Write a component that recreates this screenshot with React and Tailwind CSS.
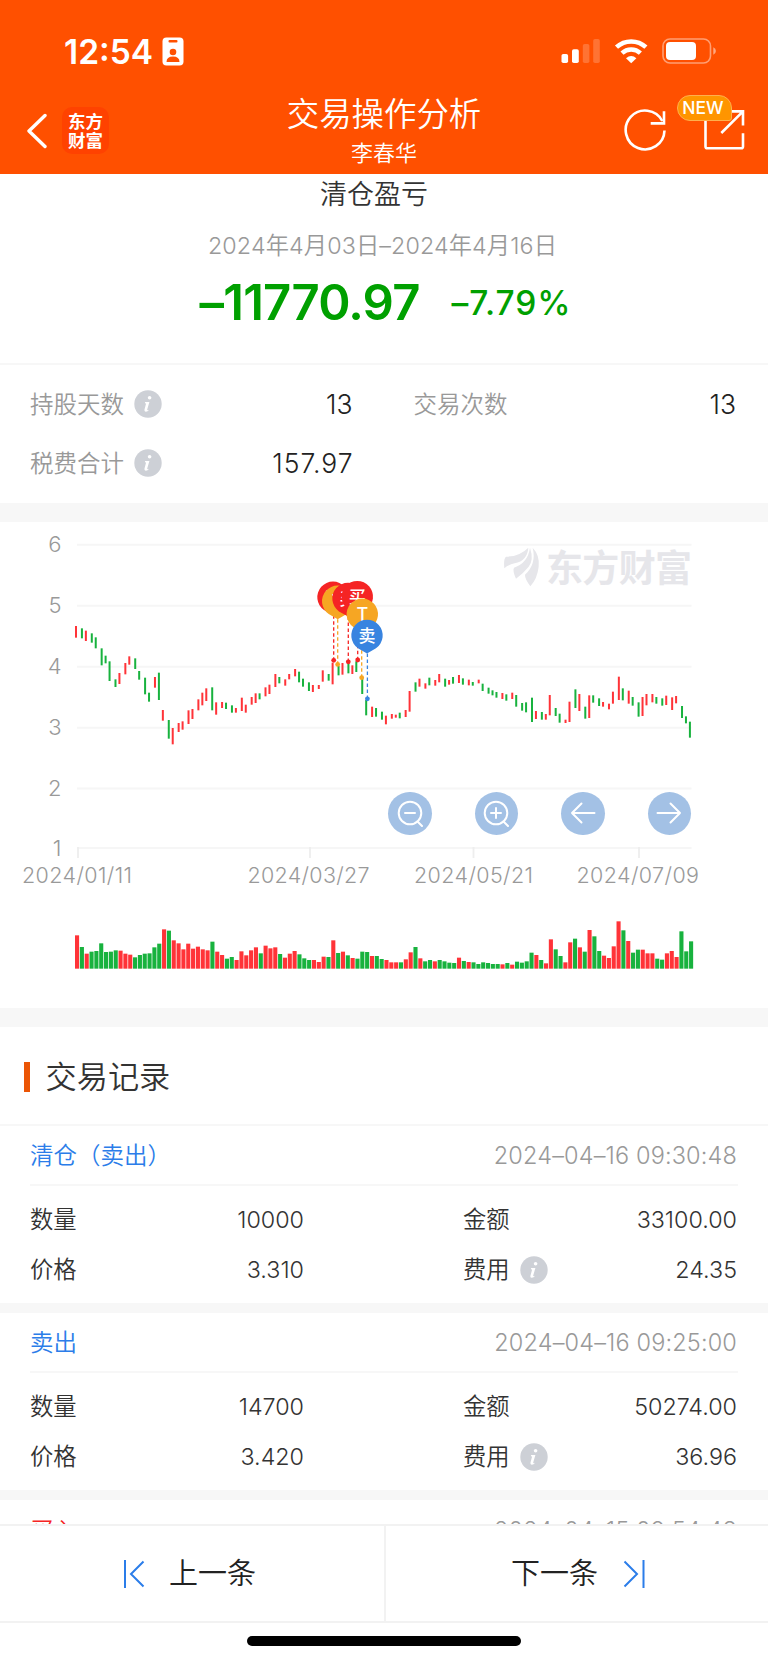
import React from 'react';

// One entry per trading day: [high, low, candle colour]
const priceBars = [
  [318, 353, 'r'], [325, 355, 'g'], [332, 363, 'r'], [340, 368, 'g'], [352, 385, 'g'], [385, 436, 'g'], [407, 430, 'g'], [424, 483, 'g'],
  [478, 501, 'g'], [459, 492, 'r'], [429, 463, 'r'], [409, 434, 'r'], [415, 447, 'g'], [453, 479, 'g'], [473, 523, 'g'], [518, 545, 'g'],
  [471, 503, 'r'], [458, 540, 'g'], [570, 602, 'r'], [600, 656, 'g'], [624, 673, 'r'], [609, 636, 'r'], [604, 629, 'r'], [571, 612, 'r'],
  [567, 597, 'r'], [538, 571, 'r'], [518, 556, 'r'], [505, 543, 'r'], [502, 571, 'g'], [547, 584, 'r'], [546, 564, 'r'], [548, 567, 'g'],
  [556, 578, 'g'], [564, 578, 'r'], [533, 573, 'r'], [554, 578, 'r'], [531, 554, 'r'], [520, 549, 'r'], [520, 538, 'g'], [502, 529, 'r'],
  [494, 522, 'r'], [462, 501, 'r'], [471, 490, 'g'], [478, 497, 'r'], [462, 478, 'r'], [447, 469, 'r'], [455, 487, 'g'], [476, 500, 'g'],
  [487, 513, 'g'], [495, 516, 'r'], [495, 507, 'r'], [451, 485, 'r'], [462, 482, 'g'], [428, 493, 'r'], [438, 466, 'g'], [429, 464, 'r'],
  [429, 460, 'g'], [436, 462, 'r'], [424, 456, 'g'], [475, 522, 'g'], [540, 586, 'g'], [560, 591, 'r'], [564, 590, 'g'], [575, 599, 'g'],
  [587, 613, 'r'], [582, 596, 'r'], [584, 593, 'r'], [578, 595, 'g'], [570, 591, 'r'], [513, 575, 'r'], [487, 515, 'g'], [476, 500, 'r'],
  [490, 506, 'r'], [473, 496, 'g'], [480, 497, 'r'], [462, 487, 'r'], [476, 500, 'g'], [480, 494, 'r'], [471, 491, 'g'], [465, 489, 'r'],
  [475, 494, 'g'], [479, 496, 'r'], [486, 497, 'g'], [479, 490, 'r'], [491, 513, 'g'], [503, 521, 'g'], [511, 526, 'g'], [516, 533, 'g'],
  [519, 537, 'r'], [523, 542, 'g'], [518, 537, 'r'], [525, 560, 'g'], [549, 572, 'g'], [547, 577, 'g'], [533, 606, 'g'], [573, 597, 'r'],
  [576, 599, 'g'], [582, 599, 'r'], [525, 586, 'r'], [564, 588, 'g'], [581, 608, 'g'], [599, 609, 'r'], [545, 606, 'r'], [508, 564, 'g'],
  [522, 573, 'r'], [560, 596, 'g'], [526, 594, 'r'], [526, 548, 'g'], [535, 558, 'g'], [546, 560, 'r'], [551, 568, 'r'], [515, 551, 'r'],
  [470, 540, 'r'], [505, 541, 'g'], [512, 551, 'r'], [531, 557, 'g'], [547, 590, 'g'], [531, 588, 'r'], [522, 556, 'r'], [522, 547, 'r'],
  [531, 551, 'g'], [535, 557, 'g'], [527, 555, 'r'], [532, 570, 'r'], [528, 550, 'r'], [558, 594, 'g'], [589, 610, 'g'], [605, 653, 'g'],
];

const volumeBars = `106r 141g 161r 155g 153g 130g 156g 155g 151g 152r 161r 164r 172g 165g 161g 160g
142g 131g 88r 92g 121r 130r 148r 131r 146r 140r 148r 151r 125g 155r 165r 176g
171g 180r 154r 166r 151r 142r 160g 137r 145r 142r 162g 173r 161r 153r 163g 175g
180g 180r 186r 170r 171g 121r 159g 155r 166g 174r 176g 155g 156g 168r 168g 177g
180r 187r 187r 187g 178r 157r 141g 175r 184g 180g 184r 180g 184g 188g 189g 173r
183g 186r 187g 192g 187g 189g 192g 192g 193r 189g 194r 185g 188g 184g 158g 165r
180g 190r 118r 148g 168g 187r 127r 116g 142r 155g 90r 109g 153g 167r 174r 139r
64r 91g 123r 158g 149g 149r 160r 160r 176g 179g 160r 153r 171r 94g 154g 124g`
  .split(/\s+/)
  .map((item) => [parseInt(item, 10), item.slice(-1)]);

const barColors = { r: '#ff3338', g: '#18b23e' };

const yAxis = [
  { label: '6', y: 22.7 },
  { label: '5', y: 83.7 },
  { label: '4', y: 144.7 },
  { label: '3', y: 205.8 },
  { label: '2', y: 266.5 },
  { label: '1', y: 326 },
];

const xAxis = [
  { label: '2024/01/11', tick: 78, x: 22, width: 110 },
  { label: '2024/03/27', tick: 310, x: 247.5, width: 122 },
  { label: '2024/05/21', tick: 473.5, x: 414, width: 119 },
  { label: '2024/07/09', tick: 639, x: 576.5, width: 122.5 },
];

const markers = [
  { x: 333, y: 75.3, text: '买', color: '#f52424', lineX: 333.7, dotY: 138.3 },
  { x: 337.7, y: 79.3, text: 'T', color: '#f6a623', lineX: 337.7, dotY: 142.4 },
  { x: 348, y: 76.6, text: '买', color: '#f52424', lineX: 348.3, dotY: 139.8 },
  { x: 357.3, y: 74.7, text: '买', color: '#f52424', lineX: 357.7, dotY: 138 },
  { x: 362.3, y: 92.3, text: 'T', color: '#f6a623', lineX: 361.7, dotY: 155.7 },
  { x: 367, y: 113.5, text: '卖', color: '#3884e0', lineX: 367.4, dotY: 176.8 },
];

const records = [
  { type: '清仓（卖出）', time: '2024–04–16 09:30:48', amount: '10000', total: '33100.00', price: '3.310', fee: '24.35' },
  { type: '卖出', time: '2024–04–16 09:25:00', amount: '14700', total: '50274.00', price: '3.420', fee: '36.96' },
];

const InfoIcon = () => (
  <svg className="ml-2.5 h-7 w-7 shrink-0" viewBox="0 0 28 28">
    <circle cx="14" cy="14" r="13.7" fill="#cdd0d6" />
    <circle cx="15.6" cy="7.8" r="1.8" fill="#fff" />
    <path d="M11.2 12h4.2l-2.2 7.6q-.2 1.2 1.9.2-1.5 2.1-3.4 2-1.7-.2-1.2-2.2l1.6-6-1.3-.4z" fill="#fff" />
  </svg>
);

const StatusBar = () => (
  <div className="flex h-[102px] items-center justify-between pl-[64px] pr-[51px]">
    <div className="flex items-center gap-[9px]">
      <span className="pt-[3px] text-[33.5px] font-semibold leading-none text-white">12:54</span>
      <svg width="22" height="29" viewBox="0 0 22 29">
        <rect x="0.5" y="0.5" width="21" height="28" rx="4" fill="#fff" />
        <rect x="6.5" y="3" width="9" height="2.4" rx="1" fill="#ff5000" />
        <circle cx="11" cy="15" r="3.3" fill="#ff5000" />
        <path d="M4.5 25q0-5.5 6.5-5.5t6.5 5.5z" fill="#ff5000" />
      </svg>
    </div>
    <svg width="156" height="28" viewBox="561 37 156 28">
      <rect x="561.5" y="54" width="6.6" height="9" rx="1.8" fill="#fff" />
      <rect x="572" y="49.3" width="6.8" height="13.7" rx="1.8" fill="#fff" />
      <rect x="582.8" y="44" width="6.6" height="19" rx="1.8" fill="#fff" opacity="0.2" />
      <rect x="593.2" y="39" width="6.6" height="24" rx="1.8" fill="#fff" opacity="0.2" />
      <g fill="none" stroke="#fff" strokeWidth="4.5">
        <path d="M616.5 47.2a21.5 21.5 0 0 1 29.4 0" />
        <path d="M622 53.2a13.5 13.5 0 0 1 18.4 0" />
      </g>
      <path d="M626 58.2q5.2-4.2 10.4 0l-5.2 5z" fill="#fff" />
      <rect x="663" y="39" width="47.5" height="24" rx="7" fill="none" stroke="#fff" strokeWidth="1.6" opacity="0.45" />
      <rect x="666" y="42" width="30" height="18" rx="4" fill="#fff" />
      <path d="M713.3 47.3q2.6 1 2.6 3.7t-2.6 3.7z" fill="#fff" opacity="0.5" />
    </svg>
  </div>
);

const Header = () => (
  <header className="h-[173.5px] bg-[#ff5000]">
    <StatusBar />
    <div className="grid h-[71px] grid-cols-[1fr_auto_1fr] items-start text-white">
      <div className="flex items-center gap-[15px] pl-[26px] pt-[5px]">
        <svg width="21" height="36" viewBox="0 0 21 36" fill="none" stroke="#fff" strokeWidth="3.4">
          <path d="M19 2.5L3 18 19 33.5" strokeLinecap="round" strokeLinejoin="round" />
        </svg>
        <div className="flex h-[47px] w-[47px] flex-col items-center justify-center rounded-[10px] bg-[#ff4200] pb-px font-['Noto_Sans_CJK_SC'] text-[17.5px] font-bold leading-[19px]">
          <span>东方</span>
          <span>财富</span>
        </div>
      </div>
      <div className="flex flex-col items-center">
        <h1 className="-mt-[9px] text-[32.4px] font-[350] leading-[44px]">交易操作分析</h1>
        <p className="text-[22px] font-[350] leading-[33px]">李春华</p>
      </div>
      <div className="relative flex justify-end pr-[22px]">
        <svg width="122" height="50" viewBox="624 102 122 50" fill="none" stroke="#fff" strokeWidth="2.6">
          <path d="M664.5 130.5a19.4 19.4 0 1 1-2.2-9.5" />
          <path d="M664 111.2v12.2h-13.3" />
          <path d="M705.5 119v27.4q0 1.8 1.8 1.8h33.9q1.8 0 1.8-1.8v-13.2" />
          <path d="M730 111.4h13v14M743 111.4L721.3 133" />
        </svg>
        <span className="absolute -top-[7px] right-[36px] flex h-[26px] w-[55px] items-center justify-center rounded-[13px] rounded-br-[3px] border border-[#ffb04d] bg-[#ff9500] pr-[3px] pt-px text-[17.5px] font-medium">
          NEW
        </span>
      </div>
    </div>
  </header>
);

const Summary = () => (
  <section>
    <div className="flex h-[191px] flex-col items-center border-b-2 border-[#f7f7f7]">
      <h2 className="pr-5 text-[27px] font-[350] leading-[41px] text-[#333]">清仓盈亏</h2>
      <p className="mt-[12px] whitespace-nowrap pr-[3px] text-[23.3px] font-[350] leading-[38px] tracking-[0.1px] text-[#999]">2024年4月03日–2024年4月16日</p>
      <div className="mt-[9px] flex items-center gap-[32px] pl-[3px] leading-[58px] text-[#00a000]">
        <span className="text-[49px] font-semibold tracking-[-0.8px]">–11770.97</span>
        <span className="text-[33.5px] font-medium tracking-[0.9px]">–7.79%</span>
      </div>
    </div>
    <div className="grid h-[138px] grid-cols-2 content-start gap-x-[61px] pl-[30px] pr-8 pt-[10px] text-[23.5px] font-[350] text-[#999]">
      <div className="flex h-[59px] items-center">
        <span className="pt-[2px]">持股天数</span>
        <InfoIcon />
        <span className="ml-auto pt-px text-[26.5px] text-[#222]">13</span>
      </div>
      <div className="flex h-[59px] items-center">
        <span className="pt-[2px]">交易次数</span>
        <span className="ml-auto pt-px text-[26.5px] text-[#222]">13</span>
      </div>
      <div className="flex h-[59px] items-center">
        <span className="pt-[2px]">税费合计</span>
        <InfoIcon />
        <span className="-mr-px ml-auto pt-px text-[26.5px] tracking-[1px] text-[#222]">157.97</span>
      </div>
    </div>
  </section>
);

const Marker = ({ x, y, text, color }) => (
  <g>
    <path d={`M${x} ${y + 18}L${x - 9} ${y + 12.8}A15.7 15.7 0 1 1 ${x + 9} ${y + 12.8}Z`} fill={color} />
    <text x={x} y={y + 6.5} textAnchor="middle" fontSize={text === 'T' ? 18 : 17} fontWeight="500" fill="#fff">{text}</text>
  </g>
);

const ChartButton = ({ children }) => (
  <button className="flex h-[43.5px] w-[43.5px] items-center justify-center rounded-full bg-[#a3c1e5]">
    <svg width="28" height="28" viewBox="0 0 28 28" fill="none" stroke="#fff" strokeWidth="2" strokeLinecap="round" strokeLinejoin="round">
      {children}
    </svg>
  </button>
);

const Chart = () => (
  <section className="relative h-[486px]">
    <svg className="block" width="768" height="486" viewBox="0 0 768 486">
      {yAxis.map(({ label, y }) => (
        <g key={label}>
          <path d={`M77 ${y}H691.5`} stroke="#f6f6f6" strokeWidth="2" />
          <text x="61.5" y={y + 7.5} textAnchor="end" fontSize="22" fontWeight="350" fill="#999">{label}</text>
        </g>
      ))}
      {xAxis.map(({ label, tick, x, width }) => (
        <g key={label}>
          <path d={`M${tick} 325v11`} stroke="#eee" strokeWidth="1.8" />
          <text x={x} y="361" fontSize="21.5" fontWeight="350" textLength={width} fill="#999">{label}</text>
        </g>
      ))}

      {/* watermark */}
      <g fill="#e6e6ea">
        <g transform="translate(480 8) scale(0.3333)">
          <path d="M73 115Q70 86 78 80Q118 80 145 53Q142 92 104 100Q84 104 73 115z" />
          <path d="M108 146Q97 122 102 113Q144 98 150 53Q162 90 146 110Q130 130 108 146z" />
          <path d="M151 169Q134 145 135 134Q170 102 158 53Q180 76 176 110Q172 146 151 169z" />
        </g>
        <text x="546" y="59.5" fontSize="37" fontWeight="700" textLength="146">东方财富</text>
      </g>

      {priceBars.map(([top, bottom, color], i) => (
        <rect
          key={i}
          x={75 + Math.round(i * 2.45 + 0.3) * 1.974}
          y={top / 3 - 2}
          width="2"
          height={(bottom - top) / 3}
          fill={barColors[color]}
        />
      ))}
      {volumeBars.map(([top, color], i) => (
        <rect key={i} x={75 + i * 4.835} y={378 + top / 3} width="4.1" height={(206 - top) / 3} fill={barColors[color]} />
      ))}

      {markers.map(({ y, color, lineX, dotY }, i) => (
        <g key={i}>
          <path d={`M${lineX} ${y + 18}V${dotY}`} stroke={color} strokeWidth="1.3" strokeDasharray="3.5 2.5" />
          <circle cx={lineX} cy={dotY} r="2.4" fill={color} />
        </g>
      ))}
      {markers.map((marker, i) => (
        <Marker key={i} {...marker} />
      ))}
    </svg>
    <div className="absolute right-[77px] top-[269.5px] flex gap-[43px]">
      <ChartButton>
        <circle cx="14" cy="14" r="11.3" />
        <path d="M9 14h10M21.5 22.5l4.5 4.5" />
      </ChartButton>
      <ChartButton>
        <circle cx="14" cy="14" r="11.3" />
        <path d="M9 14h10M14 9v10M21.5 22.5l4.5 4.5" />
      </ChartButton>
      <ChartButton>
        <path d="M25.5 14H3M12.5 4.5L3 14l9.5 9.5" />
      </ChartButton>
      <ChartButton>
        <path d="M2.5 14H25M15.5 4.5L25 14l-9.5 9.5" />
      </ChartButton>
    </div>
  </section>
);

const RecordCard = ({ record }) => (
  <article className="h-[187px] border-b-[10px] border-[#f7f7f7] px-[30px]">
    <div className="flex h-[60px] items-center justify-between border-b-2 border-[#f7f7f7] pt-px text-[23.5px] font-[350]">
      <span className="text-[#2b7de9]">{record.type}</span>
      <span className="pr-px tracking-[0.15px] text-[#999]">{record.time}</span>
    </div>
    <div className="grid grid-cols-[274px_274px] justify-between pr-px pt-[10px] text-[23.3px] font-[350] text-[#333]">
      <div className="flex h-[49.5px] items-center justify-between">
        数量<span>{record.amount}</span>
      </div>
      <div className="flex h-[49.5px] items-center justify-between">
        金额<span>{record.total}</span>
      </div>
      <div className="flex h-[49.5px] items-center justify-between">
        价格<span>{record.price}</span>
      </div>
      <div className="flex h-[49.5px] items-center">
        费用
        <InfoIcon />
        <span className="ml-auto">{record.fee}</span>
      </div>
    </div>
  </article>
);

const Footer = () => (
  <footer className="h-[139px] bg-white">
    <div className="grid h-[99px] grid-cols-2 border-y-2 border-[#f2f2f2] text-[29px] font-[350] text-[#222]">
      <button className="flex items-center justify-center gap-[24px] pr-[5px] pt-px">
        <svg width="22" height="28" viewBox="0 0 22 28" fill="none" stroke="#2b7de9" strokeWidth="2">
          <path d="M2 0v28M20.5 1.5L8 14l12.5 12.5" />
        </svg>
        上一条
      </button>
      <button className="flex items-center justify-center gap-[25px] border-l-2 border-[#f2f2f2] pl-[2px] pt-px">
        下一条
        <svg width="22" height="28" viewBox="0 0 22 28" fill="none" stroke="#2b7de9" strokeWidth="2">
          <path d="M20.5 0v28M1.5 1.5L14 14 1.5 26.5" />
        </svg>
      </button>
    </div>
    <div className="mx-auto mt-[13px] h-[10px] w-[274px] rounded-full bg-black" />
  </footer>
);

const App = () => {
  return (
    <div className="flex h-[1663px] w-[768px] flex-col overflow-hidden bg-white font-['Inter','Noto_Sans_CJK_SC',sans-serif]">
      <Header />
      <main className="h-[1350.5px] overflow-hidden">
        <Summary />
        <div className="h-[19.5px] bg-[#f7f7f7]" />
        <Chart />
        <div className="h-[19px] bg-[#f7f7f7]" />
        <div className="flex h-[99px] items-center border-b-2 border-[#f7f7f7] pl-6 pt-[2px]">
          <span className="h-[30px] w-[6px] bg-[#eb5505]" />
          <h2 className="ml-[15.5px] pt-[2px] text-[31.2px] font-[350] text-[#333]">交易记录</h2>
        </div>
        {records.map((record) => (
          <RecordCard key={record.time} record={record} />
        ))}
        <div className="flex h-[60px] items-center justify-between px-[30px] pt-px text-[23.5px] font-[350]">
          <span className="text-[#f52424]">买入</span>
          <span className="pr-px tracking-[0.15px] text-[#999]">2024–04–15 09:54:48</span>
        </div>
      </main>
      <Footer />
    </div>
  );
};

export default App;
